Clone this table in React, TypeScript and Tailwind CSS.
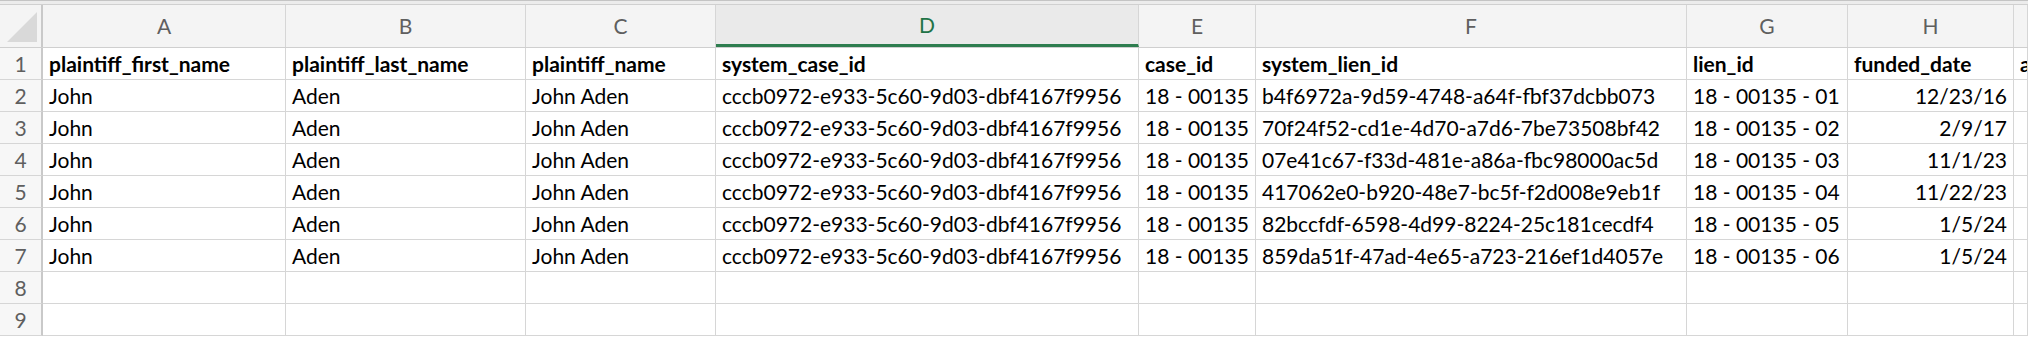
const columns = ['A', 'B', 'C', 'D', 'E', 'F', 'G', 'H', '']

const header = [
  'plaintiff_first_name',
  'plaintiff_last_name',
  'plaintiff_name',
  'system_case_id',
  'case_id',
  'system_lien_id',
  'lien_id',
  'funded_date',
  'amount_funded',
]

const liens = [
  ['b4f6972a-9d59-4748-a64f-fbf37dcbb073', '01', '12/23/16'],
  ['70f24f52-cd1e-4d70-a7d6-7be73508bf42', '02', '2/9/17'],
  ['07e41c67-f33d-481e-a86a-fbc98000ac5d', '03', '11/1/23'],
  ['417062e0-b920-48e7-bc5f-f2d008e9eb1f', '04', '11/22/23'],
  ['82bccfdf-6598-4d99-8224-25c181cecdf4', '05', '1/5/24'],
  ['859da51f-47ad-4e65-a723-216ef1d4057e', '06', '1/5/24'],
]

const rows: string[][] = liens.map(([lienId, n, date]) => [
  'John',
  'Aden',
  'John Aden',
  'cccb0972-e933-5c60-9d03-dbf4167f9956',
  '18 - 00135',
  lienId,
  `18 - 00135 - ${n}`,
  date,
  '',
])

const grid =
  'grid grid-cols-[43px_243px_240px_190px_423px_117px_431px_161px_166px_1fr]'

function RowNumber({ n }: { n: number }) {
  return (
    <div className="h-8 flex items-center justify-center border-r-2 border-b border-r-[#c9c9c9] border-b-[#d6d6d6] bg-[#f7f7f7] text-[#5f5f5f] text-[21px]">
      {n}
    </div>
  )
}

function Cell({
  children,
  right,
  bold,
}: {
  children?: React.ReactNode
  right?: boolean
  bold?: boolean
}) {
  return (
    <div
      className={`h-8 flex items-center overflow-hidden whitespace-nowrap border-r border-b border-[#d6d6d6] text-black text-[21px] px-[6px] ${
        right ? 'justify-end' : ''
      } ${bold ? 'font-bold' : ''}`}
    >
      {children}
    </div>
  )
}

export default function App() {
  return (
    <div
      className="w-[2028px] h-[338px] overflow-hidden bg-white"
      style={{ fontFamily: 'Lato, "Noto Sans", sans-serif' }}
    >
      {/* Toolbar edge */}
      <div className="h-[5px] border-t border-b border-t-[#c4c4c4] border-b-[#d0d0d0] bg-[#ececec]" />

      {/* Column letters */}
      <div className={`${grid} h-[43px] bg-[#f4f4f4] border-b border-[#cfcfcf]`}>
        <div className="flex items-end justify-end pr-[4px] pb-[5px] border-r-2 border-[#c9c9c9]">
          <svg width="30" height="30" viewBox="0 0 30 30">
            <polygon points="30,0 30,30 0,30" fill="#d9d9d9" />
          </svg>
        </div>
        {columns.map((c, i) =>
          c === 'D' ? (
            <div
              key={i}
              className="flex items-center justify-center border-r border-[#d6d6d6] bg-[#eaeaea] text-[#217346] text-[21px] border-b-[3px] border-b-[#2e7d4f]"
            >
              {c}
            </div>
          ) : (
            <div
              key={i}
              className="flex items-center justify-center border-r border-[#d6d6d6] text-[#5f5f5f] text-[21px]"
            >
              {c}
            </div>
          )
        )}
      </div>

      {/* Sheet body */}
      <div className={grid}>
        <RowNumber n={1} />
        {header.map((h) => (
          <Cell key={h} bold>
            {h}
          </Cell>
        ))}

        {rows.map((r, i) => (
          <div key={i} className="contents">
            <RowNumber n={i + 2} />
            {r.map((v, j) => (
              <Cell key={j} right={j === 7}>
                {v}
              </Cell>
            ))}
          </div>
        ))}

        {[8, 9].map((n) => (
          <div key={n} className="contents">
            <RowNumber n={n} />
            {columns.map((_, j) => (
              <Cell key={j} />
            ))}
          </div>
        ))}
      </div>
    </div>
  )
}
